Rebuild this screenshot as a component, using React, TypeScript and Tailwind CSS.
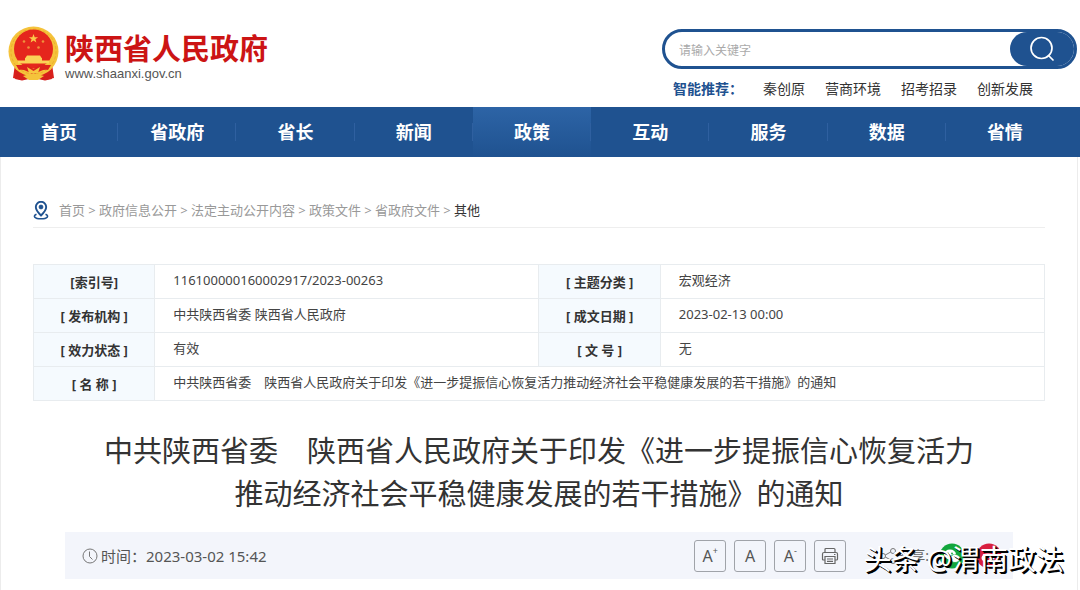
import { useState } from 'react';

interface Crumb {
    label: string;
    href: string;
}

const NAV_ITEMS = ['首页', '省政府', '省长', '新闻', '政策', '互动', '服务', '数据', '省情'];
const ACTIVE_ITEM = '政策';

const HOT_WORDS = ['秦创原', '营商环境', '招考招录', '创新发展'];

const CRUMBS: Crumb[] = [
    { label: '首页', href: '#home' },
    { label: '政府信息公开', href: '#open' },
    { label: '法定主动公开内容', href: '#statutory' },
    { label: '政策文件', href: '#policy' },
    { label: '省政府文件', href: '#province' },
];

const META_ROWS = [
    ['[索引号]', '116100000160002917/2023-00263', '[ 主题分类 ]', '宏观经济'],
    ['[ 发布机构 ]', '中共陕西省委 陕西省人民政府', '[ 成文日期 ]', '2023-02-13 00:00'],
    ['[ 效力状态 ]', '有效', '[ 文 号 ]', '无'],
];

const TH = 'h-[34px] border border-[#e8ecef] bg-[#f5fafe] text-center font-bold text-[#333]';
const TD = 'h-[34px] border border-[#e8ecef] px-[18px] pb-[3px] text-left text-[#444]';
const TOOL = 'flex h-8 w-8 items-center justify-center rounded-[3px] border border-[#a0a3a9] text-[#555]';

function Emblem() {
    return (
        <svg viewBox="0 0 51 55" className="h-[55px] w-[51px]" aria-hidden="true">
            <path d="M7 38 L5 52 L14 54 L25 51 L37 54 L46 52 L44 38 Z" fill="#d9201c" />
            <circle cx="25.500" cy="25.500" r="25" fill="#f5c33b" />
            <circle cx="25.500" cy="25.500" r="22.500" fill="none" stroke="#edb02c" strokeWidth="1" strokeDasharray="3 2" />
            <circle cx="25.500" cy="23" r="19.500" fill="#e5261d" />
            <path d="M25.500 8 l1.200 3.200 h3.400 l-2.700 2 1 3.300 -2.900 -2 -2.900 2 1 -3.300 -2.700 -2 h3.400z" fill="#fbc84b" />
            <g fill="#f0903c">
                <circle cx="16" cy="15.500" r="1.300" />
                <circle cx="35" cy="15.500" r="1.300" />
                <circle cx="20.500" cy="21.500" r="1.300" />
                <circle cx="30.500" cy="21.500" r="1.300" />
            </g>
            <path d="M19 29.500 h13 l2 3 h-17z M17 32 h17 v3 h-17z M10 34.500 h31 v3 h-31z" fill="#fbd257" />
            <path d="M8 39 H20 L25.500 43 L31 39 H43 L40 44 C36 43 31 45 25.500 49 C20 45 15 43 11 44 Z" fill="#dd231d" />
            <path d="M19 41 L25.500 45 L32 41 L30 47 H21z" fill="#f7c740" />
            <path d="M9 45 L15 52 L25.500 48 L36 52 L42 45 L44 53 L37 54.500 L25.500 52 L14 54.500 L7 53z" fill="#d4201c" />
            <path d="M15 50 L25.500 47 L36 50 L30 54 H21z" fill="#f5c33b" />
        </svg>
    );
}

function SearchIcon() {
    return (
        <svg viewBox="0 0 26 26" className="h-[26px] w-[26px]" fill="none" stroke="#fff" strokeWidth="1.700" aria-hidden="true">
            <circle cx="12.500" cy="12" r="10.500" />
            <path d="M19.500 19.500 L24 24" strokeLinecap="round" />
        </svg>
    );
}

function PinIcon() {
    return (
        <svg viewBox="0 0 16 19" className="h-[19px] w-4" fill="none" stroke="#1f5290" aria-hidden="true">
            <path d="M8 14.500 C5 11.500 2.800 9 2.800 6 a5.200 5.200 0 0 1 10.400 0 C13.200 9 11 11.500 8 14.500z" strokeWidth="1.900" />
            <circle cx="8" cy="6" r="1.900" fill="#1f5290" />
            <path d="M3.500 13.200 C-.5 15 1.500 17.800 8 17.800 S16.500 15 12.500 13.200" strokeWidth="1.600" />
        </svg>
    );
}

function ClockIcon() {
    return (
        <svg viewBox="0 0 16 16" className="h-4 w-4" fill="none" stroke="#777" aria-hidden="true">
            <circle cx="8" cy="8" r="7" />
            <path d="M7.500 3.500 V8.500 L10.500 11.500" />
        </svg>
    );
}

function PrintIcon() {
    return (
        <svg viewBox="0 0 18 18" className="h-[18px] w-[18px]" fill="none" stroke="#666" strokeWidth="1.200" aria-hidden="true">
            <path d="M4 5.500 V2.500 Q4 1.500 5 1.500 H13 Q14 1.500 14 2.500 V5.500" />
            <path d="M4 13 H2.500 Q1.500 13 1.500 12 V7 Q1.500 5.500 3 5.500 H15 Q16.500 5.500 16.500 7 V12 Q16.500 13 15.500 13 H14" />
            <path d="M4 9.500 H14 V16.500 H4z M6 12 H12 M6 14.300 H12 M13 7.500 H14.500" />
        </svg>
    );
}

function ShareIcon() {
    return (
        <svg viewBox="0 0 18 18" className="h-[18px] w-[18px]" fill="none" stroke="#777" aria-hidden="true">
            <circle cx="4" cy="9" r="2.500" />
            <circle cx="14" cy="4" r="2.500" />
            <circle cx="14" cy="14" r="2.500" />
            <path d="M6.300 8 L11.700 5 M6.300 10 L11.700 13" />
        </svg>
    );
}

function WechatIcon() {
    return (
        <svg viewBox="0 0 26 26" className="h-[26px] w-[26px]" aria-hidden="true">
            <circle cx="13" cy="13" r="12.500" fill="#12a63c" />
            <ellipse cx="11" cy="11.500" rx="6" ry="5" fill="#fff" />
            <ellipse cx="16" cy="15.500" rx="5" ry="4" fill="#fff" stroke="#12a63c" strokeWidth=".8" />
            <circle cx="9" cy="10.500" r=".9" fill="#12a63c" />
            <circle cx="13" cy="10.500" r=".9" fill="#12a63c" />
        </svg>
    );
}

function WeiboIcon() {
    return (
        <svg viewBox="0 0 26 26" className="h-[26px] w-[26px]" aria-hidden="true">
            <circle cx="13" cy="13" r="12.500" fill="#d81e3f" />
            <ellipse cx="12" cy="15" rx="6.500" ry="4.500" fill="#fff" />
            <circle cx="11.500" cy="15" r="2.400" fill="#d81e3f" />
            <path d="M15.500 7 A5 5 0 0 1 20 12.500" fill="none" stroke="#fff" strokeWidth="1.500" />
        </svg>
    );
}

export default function App() {
    const [keyword, setKeyword] = useState('');

    return (
        <div className="min-h-screen bg-white font-['Noto_Sans','Noto_Sans_CJK_SC',sans-serif] text-[13px] leading-5 text-[#444]">
            <header className="flex items-start justify-between pt-[26px] pr-[3px] pb-2 pl-2">
                <a href="#home" className="flex items-start gap-[6px]">
                    <Emblem />
                    <span className="flex flex-col pt-[6px]">
                        <span className="text-[29px] leading-[34px] font-bold text-[#cc1414]">陕西省人民政府</span>
                        <span className="font-['Liberation_Sans',sans-serif] text-[13px] leading-4 text-[#555]">www.shaanxi.gov.cn</span>
                    </span>
                </a>

                <div className="w-[415px] pt-[3px]">
                    <form
                        onSubmit={(e) => e.preventDefault()}
                        className="flex h-10 items-stretch rounded-full border-[3px] border-[#1f5290] bg-white"
                    >
                        <input
                            type="text"
                            aria-label="请输入关键字"
                            placeholder="请输入关键字"
                            value={keyword}
                            onChange={(e) => setKeyword(e.target.value)}
                            className="min-w-0 flex-1 rounded-full bg-transparent pt-1 pl-[14px] text-xs text-[#333] outline-none placeholder:text-[#aaa]"
                        />
                        <button type="submit" aria-label="搜索" className="flex w-16 items-center justify-center rounded-full bg-[#1f5290]">
                            <SearchIcon />
                        </button>
                    </form>
                    <div className="mt-[10px] flex gap-5 pl-[11px] text-sm leading-5">
                        <span className="font-bold text-[#1f5290]">智能推荐：</span>
                        {HOT_WORDS.map((word) => (
                            <a key={word} href="#search" className="text-[#333]">{word}</a>
                        ))}
                    </div>
                </div>
            </header>

            <nav className="grid h-[50px] grid-cols-9 bg-[#1f5290] pr-4 text-lg leading-[50px] font-bold text-white">
                {NAV_ITEMS.map((item) => (
                    <a
                        key={item}
                        href="#nav"
                        className={`text-center ${item === ACTIVE_ITEM ? 'bg-linear-to-b from-[#2d64a6] to-[#1f5290]' : ''}`}
                    >
                        <span className={`block ${item === '省情' ? '' : 'bg-[linear-gradient(#2f60a0,#2f60a0)] bg-[length:1px_18px] bg-right bg-no-repeat'}`}>
                            {item}
                        </span>
                    </a>
                ))}
            </nav>

            <main className="mr-[2px] border-x border-[#ececec] pr-8 pb-[11px] pl-8">
                <div className="flex items-center border-b border-[#eee] pt-[39px] pb-[3px] text-[#999]">
                    <PinIcon />
                    <ol className="ml-[10px] flex leading-7">
                        {CRUMBS.map((crumb) => (
                            <li key={crumb.label}>
                                <a href={crumb.href}>{crumb.label}</a>
                                <span className="inline-block w-[14px] text-center">&gt;</span>
                            </li>
                        ))}
                        <li className="text-[#333]">其他</li>
                    </ol>
                </div>

                <table className="mt-9 w-full table-fixed border-collapse">
                    <colgroup>
                        <col className="w-[12%]" />
                        <col className="w-[38%]" />
                        <col className="w-[12%]" />
                        <col className="w-[38%]" />
                    </colgroup>
                    <tbody>
                        {META_ROWS.map(([labelA, valueA, labelB, valueB]) => (
                            <tr key={labelA}>
                                <th scope="row" className={TH}>{labelA}</th>
                                <td className={TD}>{valueA}</td>
                                <th scope="row" className={TH}>{labelB}</th>
                                <td className={TD}>{valueB}</td>
                            </tr>
                        ))}
                        <tr>
                            <th scope="row" className={TH}>[ 名 称 ]</th>
                            <td colSpan={3} className={TD}>
                                中共陕西省委　陕西省人民政府关于印发《进一步提振信心恢复活力推动经济社会平稳健康发展的若干措施》的通知
                            </td>
                        </tr>
                    </tbody>
                </table>

                <h1 className="mt-7 text-center text-[29px] leading-[43px] text-[#333]">
                    中共陕西省委　陕西省人民政府关于印发《进一步提振信心恢复活力
                    <br />
                    推动经济社会平稳健康发展的若干措施》的通知
                </h1>

                <div className="relative mx-8 mt-[17px] flex h-[47px] items-center justify-between bg-[#f3f5fb] pr-[11px] pl-[17px]">
                    <div className="flex items-center gap-[3px] text-[15px] text-[#555]">
                        <ClockIcon />
                        <span>时间：2023-03-02 15:42</span>
                    </div>
                    <div className="flex items-center">
                        <div className="mr-[33px] flex gap-2 text-base">
                            <button type="button" aria-label="放大字号" className={TOOL}>A<sup className="text-[9px]">+</sup></button>
                            <button type="button" aria-label="默认字号" className={TOOL}>A</button>
                            <button type="button" aria-label="缩小字号" className={TOOL}>A<sup className="text-[9px]">-</sup></button>
                            <button type="button" aria-label="打印" className={TOOL}><PrintIcon /></button>
                        </div>
                        <ShareIcon />
                        <span className="mr-[10px] text-sm text-[#666]">分享:</span>
                        <div className="flex gap-[11px]">
                            <button type="button" aria-label="分享到微信" className="block"><WechatIcon /></button>
                            <button type="button" aria-label="分享到微博" className="block"><WeiboIcon /></button>
                        </div>
                    </div>
                    <div className="pointer-events-none absolute top-[7px] -right-[51px] text-[28px] leading-10 whitespace-nowrap text-white [text-shadow:1px_1px_0_#000,2px_2px_0_#000]">
                        头条 @渭南政法
                    </div>
                </div>
            </main>
        </div>
    );
}
